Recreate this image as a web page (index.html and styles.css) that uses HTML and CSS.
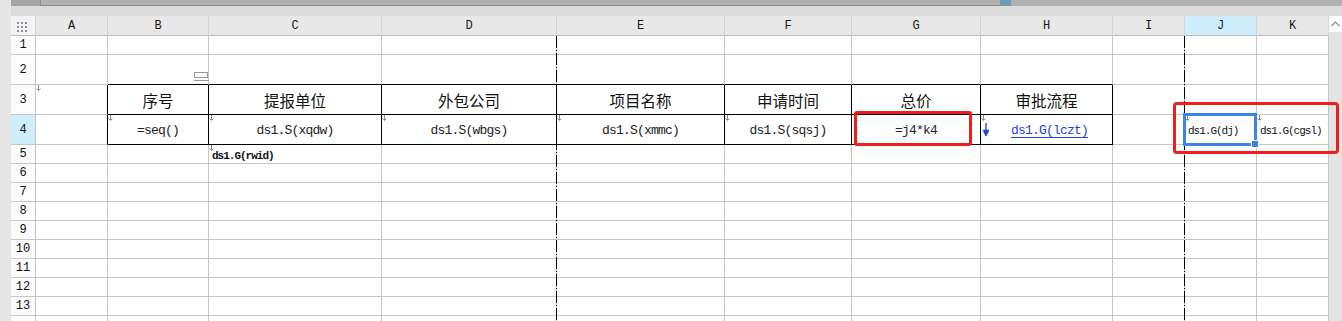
FILE: index.html
```html
<!DOCTYPE html>
<html lang="zh">
<head>
    <meta charset="UTF-8">
    <meta name="viewport" content="width=device-width, initial-scale=1.0">
    <title>报表设计</title>
    <link rel="stylesheet" href="styles.css">
</head>
<body>
<div class="app">
    <div class="side"></div>
    <div class="main">
        <div class="hscroll">
            <div class="hs-left"></div>
            <div class="hs-thumb"></div>
            <div class="hs-mark"></div>
            <div class="hs-track"></div>
        </div>
        <div class="band"></div>
        <div class="body">
            <div class="sheet">
                <div class="row hdr">
                    <div class="corner">
                        <svg width="12" height="10" viewBox="0 0 12 10">
                            <rect x="0" y="0" width="2" height="2"/><rect x="4" y="0" width="2" height="2"/><rect x="8" y="0" width="2" height="2"/>
                            <rect x="0" y="4" width="2" height="2"/><rect x="4" y="4" width="2" height="2"/><rect x="8" y="4" width="2" height="2"/>
                            <rect x="0" y="8" width="2" height="2"/><rect x="4" y="8" width="2" height="2"/><rect x="8" y="8" width="2" height="2"/>
                        </svg>
                    </div>
                    <div>A</div><div>B</div><div>C</div><div>D</div><div>E</div><div>F</div><div>G</div><div>H</div><div>I</div><div class="sel">J</div><div>K</div>
                </div>
                <div class="row"><div class="rh">1</div><div></div><div></div><div></div><div></div><div></div><div></div><div></div><div></div><div></div><div></div><div></div></div>
                <div class="row tall">
                    <div class="rh">2</div>
                    <div></div>
                    <div class="bb">
                        <svg class="note" width="15" height="10" viewBox="0 0 15 10"><rect x="0.5" y="0.5" width="13" height="5"/><path d="M0 8.5H15"/></svg>
                    </div>
                    <div class="bb"></div><div class="bb"></div><div class="bb"></div><div class="bb"></div><div class="bb"></div><div class="bb"></div>
                    <div></div><div></div><div></div>
                </div>
                <div class="row tall">
                    <div class="rh">3</div>
                    <div class="br"><svg class="mk" width="5" height="6"><path d="M2.5 0V5M0.5 3.5L2.5 5.5L4.5 3.5"/></svg></div>
                    <div class="t"><span class="cn">序号</span></div>
                    <div class="t"><span class="cn">提报单位</span></div>
                    <div class="t"><span class="cn">外包公司</span></div>
                    <div class="t"><span class="cn">项目名称</span></div>
                    <div class="t"><span class="cn">申请时间</span></div>
                    <div class="t"><span class="cn">总价</span></div>
                    <div class="t"><span class="cn">审批流程</span></div>
                    <div></div><div></div><div></div>
                </div>
                <div class="row tall">
                    <div class="rh sel">4</div>
                    <div class="br"></div>
                    <div class="t"><svg class="mk" width="5" height="6"><path d="M2.5 0V5M0.5 3.5L2.5 5.5L4.5 3.5"/></svg><span class="f">=seq()</span></div>
                    <div class="t"><svg class="mk" width="5" height="6"><path d="M2.5 0V5M0.5 3.5L2.5 5.5L4.5 3.5"/></svg><span class="f">ds1.S(xqdw)</span></div>
                    <div class="t"><svg class="mk" width="5" height="6"><path d="M2.5 0V5M0.5 3.5L2.5 5.5L4.5 3.5"/></svg><span class="f">ds1.S(wbgs)</span></div>
                    <div class="t"><svg class="mk" width="5" height="6"><path d="M2.5 0V5M0.5 3.5L2.5 5.5L4.5 3.5"/></svg><span class="f">ds1.S(xmmc)</span></div>
                    <div class="t"><svg class="mk" width="5" height="6"><path d="M2.5 0V5M0.5 3.5L2.5 5.5L4.5 3.5"/></svg><span class="f">ds1.S(sqsj)</span></div>
                    <div class="t"><span class="f">=j4*k4</span></div>
                    <div class="t">
                        <svg class="mk" width="5" height="6"><path d="M2.5 0V5M0.5 3.5L2.5 5.5L4.5 3.5"/></svg>
                        <svg class="down" width="6" height="13" viewBox="0 0 6 13"><path d="M3 0V10"/><polygon points="0.5,7.5 5.5,7.5 3,12.5"/></svg>
                        <span class="f link">ds1.G(lczt)</span>
                    </div>
                    <div></div>
                    <div class="left"><svg class="mk" width="5" height="6"><path d="M2.5 0V5M0.5 3.5L2.5 5.5L4.5 3.5"/></svg><span class="s">ds1.G(dj)</span></div>
                    <div class="left"><svg class="mk" width="5" height="6"><path d="M2.5 0V5M0.5 3.5L2.5 5.5L4.5 3.5"/></svg><span class="s">ds1.G(cgsl)</span></div>
                </div>
                <div class="row">
                    <div class="rh">5</div>
                    <div></div><div></div>
                    <div class="left low"><svg class="mk" width="5" height="6"><path d="M2.5 0V5M0.5 3.5L2.5 5.5L4.5 3.5"/></svg><span class="s b">ds1.G(rwid)</span></div>
                    <div></div><div></div><div></div><div></div><div></div><div></div><div></div><div></div>
                </div>
                <div class="row"><div class="rh">6</div><div></div><div></div><div></div><div></div><div></div><div></div><div></div><div></div><div></div><div></div><div></div></div>
                <div class="row"><div class="rh">7</div><div></div><div></div><div></div><div></div><div></div><div></div><div></div><div></div><div></div><div></div><div></div></div>
                <div class="row"><div class="rh">8</div><div></div><div></div><div></div><div></div><div></div><div></div><div></div><div></div><div></div><div></div><div></div></div>
                <div class="row"><div class="rh">9</div><div></div><div></div><div></div><div></div><div></div><div></div><div></div><div></div><div></div><div></div><div></div></div>
                <div class="row"><div class="rh">10</div><div></div><div></div><div></div><div></div><div></div><div></div><div></div><div></div><div></div><div></div><div></div></div>
                <div class="row"><div class="rh">11</div><div></div><div></div><div></div><div></div><div></div><div></div><div></div><div></div><div></div><div></div><div></div></div>
                <div class="row"><div class="rh">12</div><div></div><div></div><div></div><div></div><div></div><div></div><div></div><div></div><div></div><div></div><div></div></div>
                <div class="row"><div class="rh">13</div><div></div><div></div><div></div><div></div><div></div><div></div><div></div><div></div><div></div><div></div><div></div></div>
                <div class="row"><div class="rh"></div><div></div><div></div><div></div><div></div><div></div><div></div><div></div><div></div><div></div><div></div><div></div></div>

                <!-- page breaks -->
                <div class="brk b1"></div>
                <div class="brk b2"></div>
                <!-- highlights -->
                <div class="hl hl1"></div>
                <div class="hl hl2"></div>
                <div class="pick"><div class="handle"></div></div>
            </div>
            <div class="vscroll">
                <div class="vs-up">
                    <svg width="9" height="6" viewBox="0 0 9 6"><path d="M0.5 5L4.5 1L8.5 5"/></svg>
                </div>
            </div>
        </div>
    </div>
</div>
</body>
</html>
```

FILE: styles.css
```css
body {
    margin: 0;
    overflow: hidden;
    background-color: #e6e6e6;
    font-family: "Liberation Mono", "Noto Sans CJK SC", monospace;
}
.app {
    display: flex;
    height: 321px;
    overflow: hidden;
}
.side {
    width: 11px;
    flex: none;
    background-color: #e6e6e6;
}
.main {
    width: 1331px;
    display: flex;
    flex-direction: column;
}
.hscroll {
    height: 6px;
    display: flex;
    flex: none;
}
.hs-left {
    width: 29px;
    background-color: #a6a6a6;
    border-right: 1px solid #8e8e8e;
}
.hs-thumb {
    width: 959px;
    box-sizing: border-box;
    background-color: #b2b2b2;
    border-bottom: 1px solid #8c8c8c;
}
.hs-mark {
    width: 11px;
    background-color: #6b9dae;
}
.hs-track {
    flex: 1;
    background-color: #b0b0b0;
}
.band {
    height: 10px;
    flex: none;
    background-color: #dcdcdc;
}
.body {
    display: flex;
    flex: 1;
    min-height: 0;
}
.sheet {
    width: 1318px;
    flex: none;
    position: relative;
    background-color: white;
}
.vscroll {
    flex: 1;
    background-color: #e3e3e3;
}
.vs-up {
    height: 16px;
    background-color: white;
    display: flex;
    align-items: center;
    justify-content: center;
}
.vs-up svg {
    fill: none;
    stroke: #8a8a8a;
    stroke-width: 1.2;
}

/* grid */
.row {
    display: grid;
    grid-template-columns: 25px 72px 101px 173px 175px 168px 127px 129px 132px 72px 72px 72px;
    height: 19px;
}
.row.tall {
    height: 30px;
}
.row.hdr {
    height: 20px;
}
.row > div {
    box-sizing: border-box;
    position: relative;
    display: flex;
    align-items: center;
    justify-content: center;
    border-right: 1px solid #c6c6c6;
    border-bottom: 1px solid #c6c6c6;
    overflow: visible;
}
.row.hdr > div {
    background-color: #e8e8e8;
    border-right-color: #d6d6d6;
    border-bottom-color: #bcbcbc;
    font-size: 12px;
    color: #1a1a1a;
}
.row.hdr > .corner {
    background-color: #f3f3f6;
    padding: 3px 0 0 0;
}
.corner svg {
    fill: #8e8e8e;
}
.row.hdr > .sel,
.row > .rh.sel {
    background-color: #cdeefa;
}
.rh {
    background-color: #fcfcfc;
    font-size: 12px;
    color: #111;
}
.row > .bb {
    border-bottom-color: #000;
}
.row > .br {
    border-right-color: #000;
}
.row > .t {
    border-right-color: #000;
    border-bottom-color: #000;
}
.row > .left {
    justify-content: flex-start;
    padding-left: 3px;
}
.row > .low {
    align-items: flex-end;
    padding-bottom: 1px;
}

/* cell content */
.cn {
    font-family: "Noto Sans CJK SC", sans-serif;
    font-size: 15.5px;
    color: #111;
}
.f {
    font-size: 13px;
    letter-spacing: -0.8px;
    color: #222;
    padding-top: 2px;
}
.s {
    font-size: 11px;
    letter-spacing: -1px;
    color: #111;
    padding-top: 2px;
}
.b {
    font-weight: bold;
}
.link {
    color: #1e3fe0;
    text-decoration: underline;
    text-underline-offset: 3px;
    padding-left: 6px;
}
.mk {
    position: absolute;
    left: 0;
    top: 0;
    fill: none;
    stroke: #8a8a8a;
}
.down {
    position: absolute;
    left: 2px;
    top: 8px;
    stroke: #1e3fe0;
    fill: #1e3fe0;
    stroke-width: 1.3;
}
.note {
    position: absolute;
    left: 86px;
    top: 17px;
    fill: none;
    stroke: #9a9a9a;
}

/* overlays */
.brk {
    position: absolute;
    top: 20px;
    bottom: 0;
    width: 1px;
    background: repeating-linear-gradient(to bottom, #000 0 12px, transparent 12px 14px, #000 14px 15px, transparent 15px 17px);
}
.b1 {
    left: 545px;
}
.b2 {
    left: 1173px;
}
.hl {
    position: absolute;
    box-sizing: border-box;
    border: 3px solid #f21c1c;
    border-radius: 3px;
}
.hl1 {
    left: 843px;
    top: 95px;
    width: 118px;
    height: 35px;
}
.hl2 {
    left: 1162px;
    top: 86px;
    width: 166px;
    height: 52px;
    border-radius: 4px;
}
.pick {
    position: absolute;
    box-sizing: border-box;
    left: 1172px;
    top: 97px;
    width: 74px;
    height: 33px;
    border: 3px solid #3c84e6;
}
.handle {
    position: absolute;
    right: -5px;
    bottom: -5px;
    width: 6px;
    height: 6px;
    background-color: #3c84e6;
    border: 1px solid white;
}
```
